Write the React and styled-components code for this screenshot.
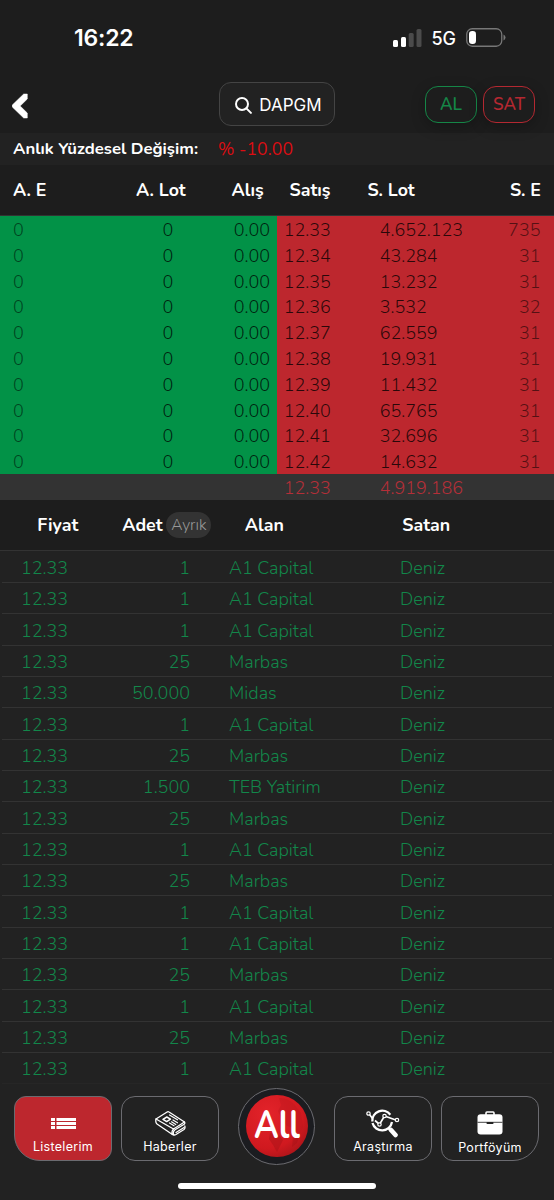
import React from 'react'
import styled, { createGlobalStyle } from 'styled-components'

// DATA
const asks = [
  ['12.33', '4.652.123', '735'],
  ['12.34', '43.284', '31'],
  ['12.35', '13.232', '31'],
  ['12.36', '3.532', '32'],
  ['12.37', '62.559', '31'],
  ['12.38', '19.931', '31'],
  ['12.39', '11.432', '31'],
  ['12.40', '65.765', '31'],
  ['12.41', '32.696', '31'],
  ['12.42', '14.632', '31']
]

const trades = [
  ['1', 'A1 Capital'],
  ['1', 'A1 Capital'],
  ['1', 'A1 Capital'],
  ['25', 'Marbas'],
  ['50.000', 'Midas'],
  ['1', 'A1 Capital'],
  ['25', 'Marbas'],
  ['1.500', 'TEB Yatirim'],
  ['25', 'Marbas'],
  ['1', 'A1 Capital'],
  ['25', 'Marbas'],
  ['1', 'A1 Capital'],
  ['1', 'A1 Capital'],
  ['25', 'Marbas'],
  ['1', 'A1 Capital'],
  ['25', 'Marbas'],
  ['1', 'A1 Capital']
]

// ICONS
const SignalIcon = () => (
  <svg width="29" height="18" viewBox="0 0 29 18">
    <rect x="0" y="11" width="5" height="7" rx="1.5" fill="#fff" />
    <rect x="8" y="8" width="5" height="10" rx="1.5" fill="#fff" />
    <rect x="15.7" y="4" width="5" height="14" rx="1.5" fill="#4b4b4b" />
    <rect x="23.5" y="0" width="5" height="18" rx="1.5" fill="#4b4b4b" />
  </svg>
)

const BatteryIcon = () => (
  <svg width="40" height="19" viewBox="0 0 40 19">
    <rect x="0.75" y="0.75" width="35" height="17.5" rx="5.5" fill="none" stroke="#777" strokeWidth="1.3" />
    <rect x="3" y="3" width="7" height="13" rx="3.2" fill="#fff" />
    <path d="M37.5 6.5q2 .8 2 3t-2 3z" fill="#777" />
  </svg>
)

const BackIcon = () => (
  <svg width="16" height="26" viewBox="0 0 16 26">
    <path d="M15.3 1v5L8.200 13l7.100 7v5h-3.600L.5 14.200q-.8-1.200 0-2.400L11.700 1z" fill="#fff" stroke="#fff" strokeWidth=".5" strokeLinejoin="round" />
  </svg>
)

const SearchIcon = () => (
  <svg width="17" height="17" viewBox="0 0 17 17" fill="none" stroke="#fff" strokeWidth="2">
    <circle cx="7" cy="7" r="6" />
    <path d="m11.4 11.4 4.5 4.5" strokeLinecap="round" />
  </svg>
)

const ListIcon = () => (
  <svg width="25" height="11" viewBox="0 0 25 11" fill="#fff">
    <path d="M0 0h4v3H0zM5.500 0H25v3H5.500zM0 4h4v3H0zM5.500 4H25v3H5.500zM0 8h4v3H0zM5.500 8H25v3H5.500z" />
  </svg>
)

const NewsIcon = () => (
  <svg width="31" height="25" viewBox="0 0 31 25" fill="none" stroke="#fff" strokeWidth="1.3" strokeLinejoin="round" strokeLinecap="round">
    <path d="M12.5 .8q.8-.3 1.500.2L29.500 11 18.500 18 1 8z" />
    <path d="M1 8q-.8 3.500 1 5l15 10.200q2 1.400 4 .3l8-5q1.500-1.300.8-3.500" />
    <path d="M29.500 11q.8 1.300-.3 2.200L20 18.700q-2.300 1.600-1.500 4.800M18.500 18q-2 2-1.500 5" />
    <path d="m21 21.500 8-5" />
    <path d="m8 8.300 3.800-2.300 3.700 2.200-3.800 2.400z" strokeWidth="1.500" />
    <path d="m14.500 4 8 4.800M18 9l4.500 2.800M14.500 12l4.500 2.800M16.500 10.800l4.300 2.700" strokeWidth="1.200" />
  </svg>
)

const ResearchIcon = () => (
  <svg width="34" height="29" viewBox="0 0 34 29" fill="none" stroke="#fff">
    <path d="M6.300 12.500a10 10 0 0 1 18-6.700M26 13a10 10 0 0 1-19.500 1" strokeWidth="2.300" />
    <path d="m22.500 19 2 2" strokeWidth="2.500" />
    <path d="m25 21 4.500 5" strokeWidth="4.600" strokeLinecap="round" />
    <path d="m3.500 5.500 3 4M9 11.500l4.500 4 5-8.500 12 4.200" strokeWidth="1.700" />
    <g fill="#222" strokeWidth="1.200">
      <circle cx="2.500" cy="4.500" r="1.700" />
      <circle cx="13.500" cy="15.500" r="1.700" />
      <circle cx="18.500" cy="7" r="1.700" />
      <circle cx="31" cy="11" r="1.700" />
    </g>
  </svg>
)

const BriefcaseIcon = () => (
  <svg width="26" height="24" viewBox="0 0 26 24">
    <path d="M9 4V1.900q0-.9.900-.9h6.200q.9 0 .9.900V4" fill="none" stroke="#fff" strokeWidth="1.600" />
    <rect x="0.500" y="3.200" width="25" height="20.300" rx="3.200" fill="#fff" />
    <path d="M.500 11.300h25" stroke="#333" strokeWidth="0.900" />
    <rect x="9.500" y="11" width="7" height="2" rx="0.800" fill="#222" />
  </svg>
)

const Globe = () => (
  <svg width="62" height="62" viewBox="0 0 62 62">
    <defs>
      <radialGradient id="globe" cx="0.35" cy="0.3" r="0.8">
        <stop offset="0" stopColor="#e3232a" />
        <stop offset="0.7" stopColor="#d0191f" />
        <stop offset="1" stopColor="#a81419" />
      </radialGradient>
    </defs>
    <circle cx="31" cy="31" r="31" fill="url(#globe)" />
    <path d="M33 3q8-1 15 6l7 9 2 14-4 8-5-7-7-2-5-6-4-9 3-6z" fill="#b8171d" opacity=".35" />
    <path d="M24 38l9 2 4 5-3 6-3 6-4-7-4-6zM47 43l6-1-2 6-5 4z" fill="#a01217" opacity=".4" />
  </svg>
)

const App = () => (
  <>
    <GlobalStyle />
    <Screen>
      <StatusBar>
        <Clock>16:22</Clock>
        <StatusIcons>
          <SignalIcon />
          <Network>5G</Network>
          <BatteryIcon />
        </StatusIcons>
      </StatusBar>
      <Header>
        <BackButton><BackIcon /></BackButton>
        <SearchButton>
          <SearchIcon />
          <span>DAPGM</span>
        </SearchButton>
        <TradeButtons>
          <TradeButton $color="#158647">AL</TradeButton>
          <TradeButton $color="#b42831">SAT</TradeButton>
        </TradeButtons>
      </Header>
      <ChangeBar>
        <ChangeLabel>Anlık Yüzdesel Değişim:</ChangeLabel>
        <ChangeValue>% -10.00</ChangeValue>
      </ChangeBar>

      <DepthHead>
        <span>A. E</span>
        <span>A. Lot</span>
        <span>Alış</span>
        <span>Satış</span>
        <span>S. Lot</span>
        <span>S. E</span>
      </DepthHead>
      <Depth>
        <Side $color="#029247">
          {asks.map(([price]) => (
            <BidRow key={price}>
              <Faded>0</Faded>
              <span>0</span>
              <span>0.00</span>
            </BidRow>
          ))}
        </Side>
        <Side $color="#bd272e">
          {asks.map(([price, lot, count]) => (
            <AskRow key={price}>
              <span>{price}</span>
              <span>{lot}</span>
              <Faded>{count}</Faded>
            </AskRow>
          ))}
        </Side>
      </Depth>
      <TotalRow>
        <AskRow>
          <span>12.33</span>
          <span>4.919.186</span>
        </AskRow>
      </TotalRow>

      <TradesHead>
        <span>Fiyat</span>
        <span>Adet</span>
        <Chip>Ayrık</Chip>
        <span>Alan</span>
        <span>Satan</span>
      </TradesHead>
      <Trades>
        {trades.map(([amount, buyer], i) => (
          <TradeRow key={i}>
            <span>12.33</span>
            <Amount>{amount}</Amount>
            <Name>{buyer}</Name>
            <Name>Deniz</Name>
          </TradeRow>
        ))}
      </Trades>

      <TabBar>
        <Tab $active $radius="12px 12px 12px 26px">
          <IconBox><ListIcon /></IconBox>
          <span>Listelerim</span>
        </Tab>
        <Tab>
          <IconBox><NewsIcon /></IconBox>
          <span>Haberler</span>
        </Tab>
        <LogoRing>
          <Logo>
            <Globe />
            <LogoText>All</LogoText>
          </Logo>
        </LogoRing>
        <Tab>
          <IconBox><ResearchIcon /></IconBox>
          <span>Araştırma</span>
        </Tab>
        <Tab $radius="12px 12px 26px 12px">
          <IconBox $tall><BriefcaseIcon /></IconBox>
          <span>Portföyüm</span>
        </Tab>
      </TabBar>
      <HomeIndicator />
    </Screen>
  </>
)

export default App

// STYLING
const GlobalStyle = createGlobalStyle`
  * {
    box-sizing: border-box;
  }
  body {
    margin: 0;
    background: #222;
  }
`

const Screen = styled.div`
  display: flex;
  flex-direction: column;
  width: 554px;
  height: 1200px;
  overflow: hidden;
  background: #222;
  color: #fff;
  font-family: Nunito, Lato, 'Noto Sans', sans-serif;
`

const StatusBar = styled.div`
  display: flex;
  justify-content: space-between;
  align-items: center;
  height: 76px;
  padding: 0 48px 0 74px;
  background: #1d1d1d;
`

const Clock = styled.div`
  font: 600 23px Inter, sans-serif;
  letter-spacing: -0.2px;
`

const StatusIcons = styled.div`
  display: flex;
  align-items: center;
  padding-bottom: 1px;
`

const Network = styled.span`
  margin: 0 10px 0 9px;
  padding-top: 2px;
  font: 500 18px Inter, sans-serif;
`

const Header = styled.div`
  display: grid;
  grid-template-columns: 1fr 116px 1fr;
  align-items: center;
  height: 57px;
  padding: 0 19px;
  background: #1d1d1d;
`

const BackButton = styled.button`
  display: flex;
  justify-self: start;
  margin-left: -7px;
  padding: 2px 0 0;
  border: 0;
  background: none;
`

const SearchButton = styled.button`
  display: flex;
  align-items: center;
  justify-content: center;
  gap: 7px;
  height: 44px;
  margin-top: -1px;
  padding: 2px 4px 0 7px;
  border: 1px solid #444;
  border-radius: 12px;
  background: #222;
  color: #fff;
  font: 400 17px Inter, sans-serif;
`

const TradeButtons = styled.div`
  display: flex;
  gap: 6px;
  justify-self: end;
`

const TradeButton = styled.button`
  width: 52px;
  height: 37px;
  padding: 0 0 1px;
  border: 1px solid ${({ $color }) => $color};
  border-radius: 13px;
  background: #1d1d1d;
  box-shadow: 0 4px 14px rgba(0, 0, 0, 0.25);
  color: ${({ $color }) => $color};
  font: 600 17px Nunito, sans-serif;
`

const ChangeBar = styled.div`
  display: flex;
  align-items: center;
  height: 32px;
  padding: 0 0 1px 13px;
  font-size: 16.7px;
`

const ChangeLabel = styled.span`
  width: 205px;
  font-weight: 700;
`

const ChangeValue = styled.span`
  color: #dc0d12;
  font-size: 17.7px;
`

const DepthHead = styled.div`
  display: grid;
  grid-template-columns: 123px 95.5px 58px 78px 142.5px 1fr;
  align-items: center;
  height: 51px;
  padding-left: 13px;
  border-bottom: 1px solid #333;
  background: #1d1d1d;
  font-size: 17.8px;
  font-weight: 700;
`

const Depth = styled.div`
  display: grid;
  grid-template-columns: 1fr 1fr;
`

const Side = styled.div`
  background: ${({ $color }) => $color};
  color: rgba(0, 0, 0, 0.78);
`

const BidRow = styled.div`
  display: grid;
  grid-template-columns: 149.5px 1fr auto;
  align-items: center;
  height: 25.8px;
  padding: 2px 7px 0 13px;
  font-size: 18px;
  font-weight: 300;
`

const AskRow = styled.div`
  display: grid;
  grid-template-columns: 96px 1fr auto;
  align-items: center;
  height: 25.8px;
  padding: 2px 13.5px 0 6.7px;
  font-size: 18px;
  font-weight: 300;
`

const Faded = styled.span`
  opacity: 0.7;
`

const TotalRow = styled.div`
  height: 26px;
  padding-left: 277px;
  background: #333;
  color: #b42f38;
`

const TradesHead = styled.div`
  display: grid;
  grid-template-columns: 85px 45px 77.5px 157.5px 1fr;
  align-items: center;
  height: 50px;
  padding-left: 37.3px;
  background: #1d1d1d;
  font-size: 17.8px;
  font-weight: 700;
`

const Chip = styled.span`
  justify-self: start;
  margin-left: -1px;
  padding: 2px 5px;
  border-radius: 13px;
  background: #333;
  color: #999;
  font-size: 15.6px;
  font-weight: 300;
`

const Trades = styled.div`
  height: 534px;
  padding: 0.8px 2px 0;
  border-top: 1px solid #333;
`

const TradeRow = styled.div`
  display: grid;
  grid-template-columns: 89px 80px 171px 1fr;
  align-items: center;
  height: 31.33px;
  padding: 2px 0 0 19px;
  border-bottom: 1px solid #333;
  color: #12874a;
  font-size: 18px;
  font-weight: 300;

  &:last-child {
    border-bottom-color: #262626;
  }
`

const Amount = styled.span`
  text-align: right;
`

const Name = styled.span`
  padding-left: 39px;
`

const TabBar = styled.div`
  display: grid;
  grid-template-columns: 98px 98px 77px 98px 98px;
  justify-content: space-between;
  align-items: end;
  height: 79px;
  padding: 0 15px 2px 14px;
`

const Tab = styled.div`
  display: flex;
  flex-direction: column;
  align-items: center;
  height: 65px;
  border: 1px solid #6b6b70;
  border-radius: ${({ $radius = '14px' }) => $radius};
  background: ${({ $active }) => ($active ? '#bd272e' : '#222')};
  font: 400 12.5px Inter, sans-serif;
  letter-spacing: 0.3px;

  &:nth-child(2) {
    margin: 0 5px 0 -5px;
  }
  &:nth-child(4) {
    margin: 0 -5px 0 5px;
  }
  &:nth-child(2),
  &:nth-child(4) {
    width: 98px;
  }
`

const IconBox = styled.div`
  display: flex;
  align-items: center;
  justify-content: center;
  height: ${({ $tall }) => ($tall ? '43px' : '42px')};
  padding-top: ${({ $tall }) => ($tall ? '9px' : '11px')};
`

const LogoRing = styled.div`
  display: flex;
  align-items: center;
  justify-content: center;
  width: 77px;
  height: 77px;
  margin-bottom: -4px;
  border: 1px solid #6b6b70;
  border-radius: 50%;
  background: #1b1c20;
`

const Logo = styled.div`
  display: grid;
  place-items: center;
  width: 62px;
  height: 62px;

  > * {
    grid-area: 1 / 1;
  }
`

const LogoText = styled.span`
  font: 700 39px/62px Nunito, sans-serif;
  transform: scaleX(0.85);
`

const HomeIndicator = styled.div`
  width: 198px;
  height: 6px;
  margin: 20px auto 0;
  border-radius: 3px;
  background: #fff;
`
